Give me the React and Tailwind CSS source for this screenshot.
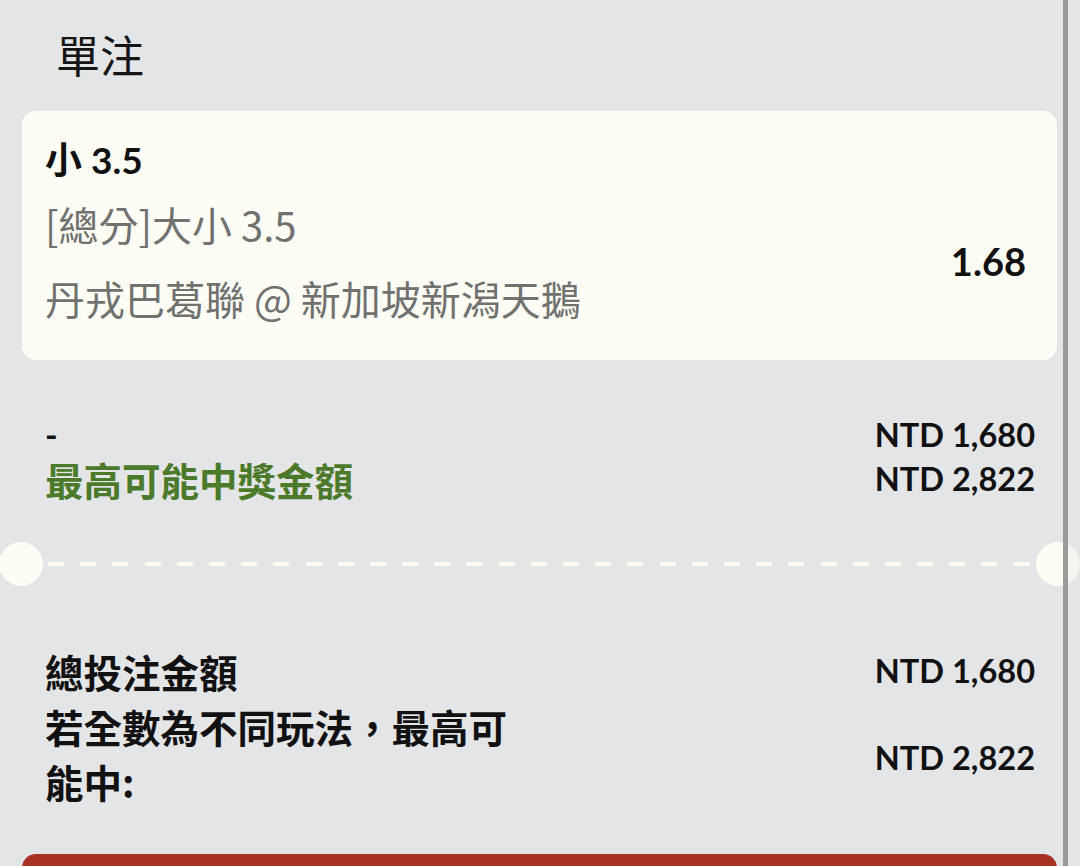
import React from 'react';

const cjk = { fontFamily: '"Noto Sans CJK TC", "Noto Sans", sans-serif' };
const latin = { fontFamily: 'Lato, "Noto Sans CJK TC", sans-serif' };

const dashes = Array.from({ length: 31 }, (_, i) => i);

function Amount({ children, className = '' }) {
  return (
    <div className={`text-[32.5px] font-bold text-[#111] text-right whitespace-nowrap ${className}`} style={latin}>
      {children}
    </div>
  );
}

function Divider() {
  return (
    <div className="relative h-[46px] flex items-center">
      <span className="absolute left-[-1px] top-[1px] w-[44px] h-[44px] rounded-full bg-[#fdfdf3]" />
      <span className="absolute left-[1036px] top-[1px] w-[44px] h-[44px] rounded-full bg-[#fdfdf3]" />
      <div className="ml-[48px] w-[982px] flex justify-between">
        {dashes.map((i) => (
          <span key={i} className="w-[16px] h-[4px] bg-[#fcfcf0]" />
        ))}
      </div>
    </div>
  );
}

export default function App() {
  return (
    <div className="relative w-[1080px] h-[866px] overflow-hidden bg-[#e4e5e7]" style={cjk}>
      {/* header */}
      <div className="pl-[56px] pt-[25px] h-[111px]">
        <h1 className="text-[44px] leading-[58px] font-normal text-[#151515]">單注</h1>
      </div>

      {/* bet card */}
      <div className="mx-[22px] w-[1035px] rounded-[14px] bg-[#fdfdf5] pl-[23px] pr-[31px] pt-[26px] pb-[25px]">
        <div className="text-[37px] leading-[46px] font-bold text-[#111]" style={latin}>
          小 3.5
        </div>
        <div className="flex items-center justify-between mt-[4px]">
          <div className="text-[40px] text-[#717170]" style={cjk}>
            <div className="leading-[74px]">[總分]大小 3.5</div>
            <div className="leading-[74px]">丹戎巴葛聯 @ 新加坡新潟天鵝</div>
          </div>
          <div className="text-[38px] font-bold text-[#111]" style={latin}>1.68</div>
        </div>
      </div>

      {/* stake row */}
      <div className="px-[45px] pt-[53px] pb-[40px] flex justify-between">
        <div className="leading-[44px]">
          <div className="text-[34px] font-bold text-[#111]" style={latin}>-</div>
          <div className="text-[38.5px] font-bold text-[#4b7a2b]">最高可能中獎金額</div>
        </div>
        <div className="leading-[44px]">
          <Amount>NTD 1,680</Amount>
          <Amount>NTD 2,822</Amount>
        </div>
      </div>

      <Divider />

      {/* totals */}
      <div className="px-[45px] pt-[56px] pb-[45px]">
        <div className="flex justify-between items-center leading-[56px]">
          <div className="text-[38.5px] font-bold text-[#111]">總投注金額</div>
          <Amount>NTD 1,680</Amount>
        </div>
        <div className="flex justify-between items-center leading-[55px]">
          <div className="text-[38.5px] font-bold text-[#111] w-[480px]">若全數為不同玩法，最高可能中:</div>
          <Amount className="pt-[6px]">NTD 2,822</Amount>
        </div>
      </div>

      {/* submit button */}
      <div className="mx-[22px] w-[1035px] h-[120px] rounded-t-[14px] bg-[#a83325]" />

      {/* scrollbar */}
      <div className="absolute top-0 right-0 w-[17px] h-full bg-[#e8e8ea]/40">
        <div className="w-[5px] h-full bg-[#9b9b9d]" />
      </div>
    </div>
  );
}
